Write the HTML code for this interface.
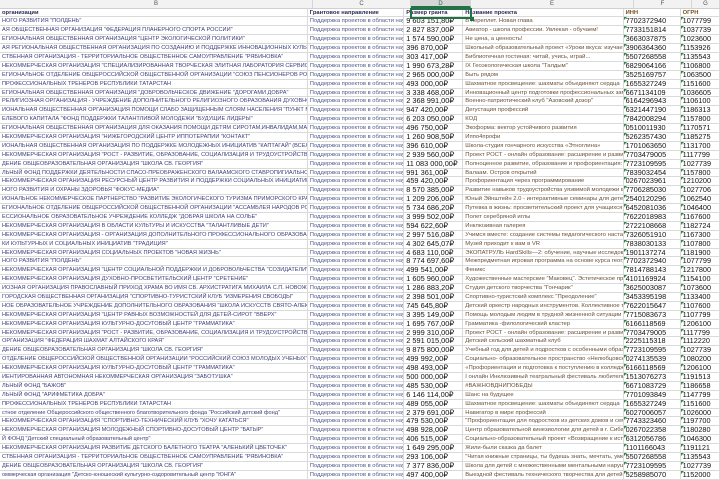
<!DOCTYPE html>
<html><head><meta charset="utf-8"><style>
*{margin:0;padding:0;box-sizing:border-box}
body{width:720px;height:480px;overflow:hidden;background:#fff;font-family:"Liberation Sans",sans-serif;position:relative}
.hd{position:absolute;left:0;top:0;width:720px;height:8.5px;background:#f2f2f2;border-bottom:1px solid #d0d0d0;font-size:6px;color:#555}
.hd span{position:absolute;top:0;height:8px;line-height:8px;text-align:center;border-right:1px solid #d6d6d6}
.rows{position:absolute;left:0;top:8.5px;width:720px}
.r{height:8.9px;display:flex;border-bottom:1px solid #dadada;white-space:nowrap;line-height:8px}
.r span{overflow:hidden;border-right:1px solid #dadada;padding-left:2px;position:relative}
.b{width:313px;font-size:5.6px;color:#3a3f7a}
.c{width:98px;font-size:5.8px;color:#4e5a8a}
.d{width:60px;font-size:7.4px;color:#111}
.e{width:163px;font-size:5.9px;color:#6a5038}
.f{width:58px;font-size:7.3px;color:#111}
.g{width:40px;font-size:7.3px;color:#111}
.f:before,.g:before{content:"";position:absolute;left:0;top:0;border-top:3px solid #2e8b3a;border-right:3px solid transparent}
.h span{font-size:5.8px;font-weight:bold;color:#2a2a5a}
.h .f:before,.h .g:before{display:none}
.sel{position:absolute;left:410px;top:8px;width:62px;height:10.5px;border:2px solid #217346}
.sel:after{content:"";position:absolute;right:-4px;bottom:-4px;width:4px;height:4px;background:#217346}
</style></head><body>
<div class="hd">
<span style="left:0;width:313px">B</span>
<span style="left:313px;width:98px">C</span>
<span style="left:411px;width:60px;background:#d6d6d6;color:#217346;border-bottom:2px solid #217346">D</span>
<span style="left:471px;width:163px">E</span>
<span style="left:634px;width:58px">F</span>
<span style="left:692px;width:28px">G</span>
</div>
<div class="rows">
<div class="r h"><span class="b">организации</span><span class="c">Грантовое направление</span><span class="d">Размер гранта</span><span class="e">Название проекта</span><span class="f" style="color:#7a5020">ИНН</span><span class="g" style="color:#7a5020">ОГРН</span></div>
<div class="r"><span class="b">НОГО РАЗВИТИЯ "ПОЛДЕНЬ"</span><span class="c">Поддержка проектов в области нау</span><span class="d">9 603 151,80₽</span><span class="e">В переплет. Новая глава</span><span class="f">7702372940</span><span class="g">1077799</span></div>
<div class="r"><span class="b">АЯ ОБЩЕСТВЕННАЯ ОРГАНИЗАЦИЯ "ФЕДЕРАЦИЯ ПЛАНЕРНОГО СПОРТА РОССИИ"</span><span class="c">Поддержка проектов в области нау</span><span class="d">2 827 837,00₽</span><span class="e">Авиатор - школа профессии. Увлекая - обучаем!</span><span class="f">7733151814</span><span class="g">1037739</span></div>
<div class="r"><span class="b">ЕГИОНАЛЬНАЯ ОБЩЕСТВЕННАЯ ОРГАНИЗАЦИЯ "ЦЕНТР ЭКОЛОГИЧЕСКОЙ ПОЛИТИКИ"</span><span class="c">Поддержка проектов в области нау</span><span class="d">1 574 590,00₽</span><span class="e">Не цена, а ценность!</span><span class="f">3663037875</span><span class="g">1023600</span></div>
<div class="r"><span class="b">АЯ РЕГИОНАЛЬНАЯ ОБЩЕСТВЕННАЯ ОРГАНИЗАЦИЯ ПО СОЗДАНИЮ И ПОДДЕРЖКЕ ИННОВАЦИОННЫХ КУЛЬТУРНЫХ</span><span class="c">Поддержка проектов в области нау</span><span class="d">396 870,00₽</span><span class="e">Школьный образовательный проект «Уроки вкуса: изучаем</span><span class="f">3906364360</span><span class="g">1153926</span></div>
<div class="r"><span class="b">СТВЕННАЯ ОРГАНИЗАЦИЯ - ТЕРРИТОРИАЛЬНОЕ ОБЩЕСТВЕННОЕ САМОУПРАВЛЕНИЕ "РЯБИНОВКА"</span><span class="c">Поддержка проектов в области нау</span><span class="d">303 417,00₽</span><span class="e">Библиотечная гостиная: читай, учись, играй...</span><span class="f">5507268558</span><span class="g">1135543</span></div>
<div class="r"><span class="b">НЕКОММЕРЧЕСКАЯ ОРГАНИЗАЦИЯ "СПЕЦИАЛИЗИРОВАННАЯ ТВОРЧЕСКАЯ ЭЛИТНАЯ ЛАБОРАТОРИЯ СЕРВИСА И ИСКУС</span><span class="c">Поддержка проектов в области нау</span><span class="d">1 990 673,28₽</span><span class="e">IX Геоэкологическая школа "Талдым"</span><span class="f">6829064166</span><span class="g">1106800</span></div>
<div class="r"><span class="b">ЕГИОНАЛЬНОЕ ОТДЕЛЕНИЕ ОБЩЕРОССИЙСКОЙ ОБЩЕСТВЕННОЙ ОРГАНИЗАЦИИ "СОЮЗ ПЕНСИОНЕРОВ РОССИИ"</span><span class="c">Поддержка проектов в области нау</span><span class="d">2 965 000,00₽</span><span class="e">Быть рядом</span><span class="f">3525169757</span><span class="g">1063500</span></div>
<div class="r"><span class="b">ПРОФЕССИОНАЛЬНЫХ ТРЕНЕРОВ РЕСПУБЛИКИ ТАТАРСТАН</span><span class="c">Поддержка проектов в области нау</span><span class="d">493 000,00₽</span><span class="e">Шахматное просвещение: шахматы объединяют сердца</span><span class="f">1655327249</span><span class="g">1151600</span></div>
<div class="r"><span class="b">ЕГИОНАЛЬНАЯ ОБЩЕСТВЕННАЯ ОРГАНИЗАЦИЯ "ДОБРОВОЛЬЧЕСКОЕ ДВИЖЕНИЕ "ДОРОГАМИ ДОБРА"</span><span class="c">Поддержка проектов в области нау</span><span class="d">3 338 468,00₽</span><span class="e">Инновационный центр подготовки профессиональных заме</span><span class="f">6671134109</span><span class="g">1036605</span></div>
<div class="r"><span class="b">РЕЛИГИОЗНАЯ ОРГАНИЗАЦИЯ - УЧРЕЖДЕНИЕ ДОПОЛНИТЕЛЬНОГО РЕЛИГИОЗНОГО ОБРАЗОВАНИЯ ДУХОВНО-ПАТР</span><span class="c">Поддержка проектов в области нау</span><span class="d">2 368 991,00₽</span><span class="e">Военно-патриотический клуб "Азовский дозор"</span><span class="f">6164296943</span><span class="g">1106100</span></div>
<div class="r"><span class="b">ИОНАЛЬНАЯ ОБЩЕСТВЕННАЯ ОРГАНИЗАЦИЯ ПОМОЩИ СЛАБО ЗАЩИЩЕННЫМ СЛОЯМ НАСЕЛЕНИЯ "ПУНКТ МИЛО</span><span class="c">Поддержка проектов в области нау</span><span class="d">947 420,00₽</span><span class="e">Дегустация профессий</span><span class="f">6321447190</span><span class="g">1186313</span></div>
<div class="r"><span class="b">ЕЛЕВОГО КАПИТАЛА "ФОНД ПОДДЕРЖКИ ТАЛАНТЛИВОЙ МОЛОДЕЖИ "БУДУЩИЕ ЛИДЕРЫ"</span><span class="c">Поддержка проектов в области нау</span><span class="d">6 203 050,00₽</span><span class="e">КОД</span><span class="f">7842008294</span><span class="g">1157800</span></div>
<div class="r"><span class="b">ЕГИОНАЛЬНАЯ ОБЩЕСТВЕННАЯ ОРГАНИЗАЦИЯ ДЛЯ ОКАЗАНИЯ ПОМОЩИ ДЕТЯМ СИРОТАМ,ИНВАЛИДАМ,МАЛО</span><span class="c">Поддержка проектов в области нау</span><span class="d">496 750,00₽</span><span class="e">Экоформа: вектор устойчивого развития</span><span class="f">0510011930</span><span class="g">1170571</span></div>
<div class="r"><span class="b">НЕКОММЕРЧЕСКАЯ ОРГАНИЗАЦИЯ "НИЖЕГОРОДСКИЙ ЦЕНТР ИППОТЕРАПИИ "КОНТАКТ"</span><span class="c">Поддержка проектов в области нау</span><span class="d">1 260 908,50₽</span><span class="e">Иппо4профи</span><span class="f">5262357430</span><span class="g">1185275</span></div>
<div class="r"><span class="b">ИОНАЛЬНАЯ ОБЩЕСТВЕННАЯ ОРГАНИЗАЦИЯ ПО ПОДДЕРЖКЕ МОЛОДЕЖНЫХ ИНИЦИАТИВ "КАПТАГАЙ" (ВСЕЛЕНН</span><span class="c">Поддержка проектов в области нау</span><span class="d">396 610,00₽</span><span class="e">Школа-студия гончарного искусства «Этноглина»</span><span class="f">1701063650</span><span class="g">1131700</span></div>
<div class="r"><span class="b">НЕКОММЕРЧЕСКАЯ ОРГАНИЗАЦИЯ "РОСТ - РАЗВИТИЕ, ОБРАЗОВАНИЕ, СОЦИАЛИЗАЦИЯ И ТРУДОУСТРОЙСТВО ДЛЯ</span><span class="c">Поддержка проектов в области нау</span><span class="d">2 939 560,00₽</span><span class="e">Проект РОСТ - онлайн образование: расширение и развитие</span><span class="f">7703479005</span><span class="g">1117799</span></div>
<div class="r"><span class="b">ДЕНИЕ ОБЩЕОБРАЗОВАТЕЛЬНАЯ ОРГАНИЗАЦИЯ "ШКОЛА СВ. ГЕОРГИЯ"</span><span class="c">Поддержка проектов в области нау</span><span class="d">11 083 000,00₽</span><span class="e">Полноценное развитие, образование и профориентация: уча</span><span class="f">7723109595</span><span class="g">1027739</span></div>
<div class="r"><span class="b">ЛЬНЫЙ ФОНД ПОДДЕРЖКИ ДЕЯТЕЛЬНОСТИ СПАСО-ПРЕОБРАЖЕНСКОГО ВАЛААМСКОГО СТАВРОПИГИАЛЬНОГО МУЖ</span><span class="c">Поддержка проектов в области нау</span><span class="d">991 361,00₽</span><span class="e">Валаам. Остров открытий</span><span class="f">7839032454</span><span class="g">1157800</span></div>
<div class="r"><span class="b">НЕКОММЕРЧЕСКАЯ ОРГАНИЗАЦИЯ РЕСУРСНЫЙ ЦЕНТР РАЗВИТИЯ И ПОДДЕРЖКИ СОЦИАЛЬНЫХ ИНИЦИАТИВ "ЗАУР</span><span class="c">Поддержка проектов в области нау</span><span class="d">459 420,00₽</span><span class="e">Профориентация через программирование</span><span class="f">0267023961</span><span class="g">1210200</span></div>
<div class="r"><span class="b">НОГО РАЗВИТИЯ И ОХРАНЫ ЗДОРОВЬЯ "ФОКУС-МЕДИА"</span><span class="c">Поддержка проектов в области нау</span><span class="d">8 570 385,00₽</span><span class="e">Развитие навыков трудоустройства уязвимой молодежи в Т</span><span class="f">7706285030</span><span class="g">1027706</span></div>
<div class="r"><span class="b">ИОНАЛЬНОЕ НЕКОММЕРЧЕСКОЕ ПАРТНЕРСТВО "РАЗВИТИЕ ЭКОЛОГИЧЕСКОГО ТУРИЗМА ПРИМОРСКОГО КРАЯ"</span><span class="c">Поддержка проектов в области нау</span><span class="d">1 209 206,00₽</span><span class="e">Юный Эйнштейн 2.0 - интерактивные семинары для детей</span><span class="f">2540120296</span><span class="g">1062540</span></div>
<div class="r"><span class="b">ЕГИОНАЛЬНОЕ ОТДЕЛЕНИЕ ОБЩЕРОССИЙСКОЙ ОБЩЕСТВЕННОЙ ОРГАНИЗАЦИИ "АССАМБЛЕЯ НАРОДОВ РОССИИ"</span><span class="c">Поддержка проектов в области нау</span><span class="d">5 734 686,20₽</span><span class="e">Путевка в жизнь: просветительский проект для учащихся</span><span class="f">6452081036</span><span class="g">1046400</span></div>
<div class="r"><span class="b">ЕССИОНАЛЬНОЕ ОБРАЗОВАТЕЛЬНОЕ УЧРЕЖДЕНИЕ КОЛЛЕДЖ "ДОБРАЯ ШКОЛА НА СОЛЬЕ"</span><span class="c">Поддержка проектов в области нау</span><span class="d">3 999 502,00₽</span><span class="e">Полет серебряной иглы</span><span class="f">7622018983</span><span class="g">1167600</span></div>
<div class="r"><span class="b">НЕКОММЕРЧЕСКАЯ ОРГАНИЗАЦИЯ В ОБЛАСТИ КУЛЬТУРЫ И ИСКУССТВА "ТАЛАНТЛИВЫЕ ДЕТИ"</span><span class="c">Поддержка проектов в области нау</span><span class="d">594 622,60₽</span><span class="e">Инклюзивная галерея</span><span class="f">2722108668</span><span class="g">1182724</span></div>
<div class="r"><span class="b">НЕКОММЕРЧЕСКАЯ ОРГАНИЗАЦИЯ - ОРГАНИЗАЦИЯ ДОПОЛНИТЕЛЬНОГО ПРОФЕССИОНАЛЬНОГО ОБРАЗОВАНИЯ "П</span><span class="c">Поддержка проектов в области нау</span><span class="d">2 997 516,08₽</span><span class="e">Учимся вместе: создание системы педагогического наставн</span><span class="f">7326051910</span><span class="g">1167300</span></div>
<div class="r"><span class="b">КИ КУЛЬТУРНЫХ И СОЦИАЛЬНЫХ ИНИЦИАТИВ "ТРАДИЦИЯ"</span><span class="c">Поддержка проектов в области нау</span><span class="d">4 302 645,07₽</span><span class="e">Музей приходит к вам в VR</span><span class="f">7838030133</span><span class="g">1107800</span></div>
<div class="r"><span class="b">НЕКОММЕРЧЕСКАЯ ОРГАНИЗАЦИЯ СОЦИАЛЬНЫХ ПРОЕКТОВ "НОВАЯ ЖИЗНЬ"</span><span class="c">Поддержка проектов в области нау</span><span class="d">4 683 110,00₽</span><span class="e">ЭКОПАТРУЛЬ HardSkills—2: обучение, научные исследова</span><span class="f">1901137274</span><span class="g">1181900</span></div>
<div class="r"><span class="b">НОГО РАЗВИТИЯ "ПОЛДЕНЬ"</span><span class="c">Поддержка проектов в области нау</span><span class="d">8 774 697,60₽</span><span class="e">Межпредметная игровая программа на основе курса геогр</span><span class="f">7702372940</span><span class="g">1077799</span></div>
<div class="r"><span class="b">НЕКОММЕРЧЕСКАЯ ОРГАНИЗАЦИЯ "ЦЕНТР СОЦИАЛЬНОЙ ПОДДЕРЖКИ И ДОБРОВОЛЬЧЕСТВА "СОЗИДАТЕЛИ"</span><span class="c">Поддержка проектов в области нау</span><span class="d">499 541,00₽</span><span class="e">Феникс</span><span class="f">7814788143</span><span class="g">1217800</span></div>
<div class="r"><span class="b">НЕКОММЕРЧЕСКАЯ ОРГАНИЗАЦИЯ ДУХОВНО-ПРОСВЕТИТЕЛЬСКИЙ ЦЕНТР "СРЕТЕНИЕ"</span><span class="c">Поддержка проектов в области нау</span><span class="d">1 605 960,00₽</span><span class="e">Художественные мастерские "Маковец". Эстетическое про</span><span class="f">4101169924</span><span class="g">1154100</span></div>
<div class="r"><span class="b">ИОЗНАЯ ОРГАНИЗАЦИЯ ПРАВОСЛАВНЫЙ ПРИХОД ХРАМА ВО ИМЯ СВ. АРХИСТРАТИГА МИХАИЛА С.П. НОВОЖИВО</span><span class="c">Поддержка проектов в области нау</span><span class="d">1 286 883,20₽</span><span class="e">Студия детского творчества "Гончарик"</span><span class="f">3625003087</span><span class="g">1073600</span></div>
<div class="r"><span class="b">ГОРОДСКАЯ ОБЩЕСТВЕННАЯ ОРГАНИЗАЦИЯ "СПОРТИВНО-ТУРИСТСКИЙ КЛУБ "ИЗМЕРЕНИЯ СВОБОДЫ"</span><span class="c">Поддержка проектов в области нау</span><span class="d">2 398 501,00₽</span><span class="e">Спортивно-туристский комплекс "Преодоление"</span><span class="f">3453395198</span><span class="g">1133400</span></div>
<div class="r"><span class="b">НОЕ ОБРАЗОВАТЕЛЬНОЕ УЧРЕЖДЕНИЕ ДОПОЛНИТЕЛЬНОГО ОБРАЗОВАНИЯ "ШКОЛА ИСКУССТВ СВЯТО-АЛЕКСИЕВ</span><span class="c">Поддержка проектов в области нау</span><span class="d">745 645,80₽</span><span class="e">Детский оркестр народных инструментов. Коллективное тв</span><span class="f">7622015647</span><span class="g">1107600</span></div>
<div class="r"><span class="b">НЕКОММЕРЧЕСКАЯ ОРГАНИЗАЦИЯ "ЦЕНТР РАВНЫХ ВОЗМОЖНОСТЕЙ ДЛЯ ДЕТЕЙ-СИРОТ "ВВЕРХ"</span><span class="c">Поддержка проектов в области нау</span><span class="d">3 395 149,00₽</span><span class="e">Помощь молодым людям в трудной жизненной ситуации в</span><span class="f">7715083673</span><span class="g">1107799</span></div>
<div class="r"><span class="b">НЕКОММЕРЧЕСКАЯ ОРГАНИЗАЦИЯ КУЛЬТУРНО-ДОСУГОВЫЙ ЦЕНТР "ГРАММАТИКА"</span><span class="c">Поддержка проектов в области нау</span><span class="d">1 695 767,00₽</span><span class="e">Грамматика -филологический кластер</span><span class="f">6166118569</span><span class="g">1206100</span></div>
<div class="r"><span class="b">НЕКОММЕРЧЕСКАЯ ОРГАНИЗАЦИЯ "РОСТ - РАЗВИТИЕ, ОБРАЗОВАНИЕ, СОЦИАЛИЗАЦИЯ И ТРУДОУСТРОЙСТВО ДЛЯ</span><span class="c">Поддержка проектов в области нау</span><span class="d">2 999 310,00₽</span><span class="e">Проект РОСТ - онлайн образование: расширение и развитие</span><span class="f">7703479005</span><span class="g">1117799</span></div>
<div class="r"><span class="b">ОРГАНИЗАЦИЯ "ФЕДЕРАЦИЯ ШАХМАТ АЛТАЙСКОГО КРАЯ"</span><span class="c">Поддержка проектов в области нау</span><span class="d">2 591 015,00₽</span><span class="e">Детский сельский шахматный клуб</span><span class="f">2225115318</span><span class="g">1112220</span></div>
<div class="r"><span class="b">ДЕНИЕ ОБЩЕОБРАЗОВАТЕЛЬНАЯ ОРГАНИЗАЦИЯ "ШКОЛА СВ. ГЕОРГИЯ"</span><span class="c">Поддержка проектов в области нау</span><span class="d">9 875 800,00₽</span><span class="e">Учебный год для детей и подростков с особенными образов</span><span class="f">7723109595</span><span class="g">1027739</span></div>
<div class="r"><span class="b">ОТДЕЛЕНИЕ ОБЩЕРОССИЙСКОЙ ОБЩЕСТВЕННОЙ ОРГАНИЗАЦИИ "РОССИЙСКИЙ СОЮЗ МОЛОДЫХ УЧЕНЫХ" В РЕСП</span><span class="c">Поддержка проектов в области нау</span><span class="d">499 992,00₽</span><span class="e">Социально- образовательное пространство «Нелюбцовский</span><span class="f">0274135539</span><span class="g">1080200</span></div>
<div class="r"><span class="b">НЕКОММЕРЧЕСКАЯ ОРГАНИЗАЦИЯ КУЛЬТУРНО-ДОСУГОВЫЙ ЦЕНТР "ГРАММАТИКА"</span><span class="c">Поддержка проектов в области нау</span><span class="d">498 493,00₽</span><span class="e">«Профориентация и подготовка к поступлению в колледж,</span><span class="f">6166118569</span><span class="g">1206100</span></div>
<div class="r"><span class="b">ИЕНТИРОВАННАЯ АВТОНОМНАЯ НЕКОММЕРЧЕСКАЯ ОРГАНИЗАЦИЯ "ЗАБОТУШКА"</span><span class="c">Поддержка проектов в области нау</span><span class="d">500 000,00₽</span><span class="e">I онлайн Инклюзивный театральный фестиваль любительск</span><span class="f">1513076273</span><span class="g">1191513</span></div>
<div class="r"><span class="b">ЛЬНЫЙ ФОНД "БАЖОВ"</span><span class="c">Поддержка проектов в области нау</span><span class="d">485 530,00₽</span><span class="e">#ВАЖНОВДНИПОБЕДЫ</span><span class="f">6671083729</span><span class="g">1186658</span></div>
<div class="r"><span class="b">ЛЬНЫЙ ФОНД "АРИФМЕТИКА ДОБРА"</span><span class="c">Поддержка проектов в области нау</span><span class="d">6 146 114,00₽</span><span class="e">Шанс на будущее</span><span class="f">7701093849</span><span class="g">1147799</span></div>
<div class="r"><span class="b">ПРОФЕССИОНАЛЬНЫХ ТРЕНЕРОВ РЕСПУБЛИКИ ТАТАРСТАН</span><span class="c">Поддержка проектов в области нау</span><span class="d">489 055,00₽</span><span class="e">Шахматное просвещение: шахматы объединяют сердца</span><span class="f">1655327249</span><span class="g">1151600</span></div>
<div class="r"><span class="b">стное отделение Общероссийского общественного благотворительного фонда "Российский детский фонд"</span><span class="c">Поддержка проектов в области нау</span><span class="d">2 379 691,00₽</span><span class="e">Навигатор в мире профессий</span><span class="f">6027006057</span><span class="g">1026000</span></div>
<div class="r"><span class="b">НЕКОММЕРЧЕСКАЯ ОРГАНИЗАЦИЯ "СПОРТИВНО-ТЕХНИЧЕСКИЙ КЛУБ "ХОЧУ КАТАТЬСЯ"</span><span class="c">Поддержка проектов в области нау</span><span class="d">479 530,00₽</span><span class="e">"Профориентация для подростков из детских домов и семе</span><span class="f">7743323460</span><span class="g">1197700</span></div>
<div class="r"><span class="b">НЕКОММЕРЧЕСКАЯ ОРГАНИЗАЦИЯ МОЛОДЕЖНЫЙ СПОРТИВНО-ДОСУГОВЫЙ ЦЕНТР "БАТЫР"</span><span class="c">Поддержка проектов в области нау</span><span class="d">498 928,00₽</span><span class="e">Центр образовательной кинезиологии для детей в г. Сибай</span><span class="f">0267022358</span><span class="g">1180280</span></div>
<div class="r"><span class="b">Й ФОНД "Детский специальный образовательный центр"</span><span class="c">Поддержка проектов в области нау</span><span class="d">406 515,00₽</span><span class="e">Социально-образовательный проект «Возвращение к исто</span><span class="f">6312056786</span><span class="g">1046300</span></div>
<div class="r"><span class="b">НЕКОММЕРЧЕСКАЯ ОРГАНИЗАЦИЯ РАЗВИТИЕ ДЕТСКОГО БАЛЕТНОГО ТЕАТРА "АЛЕНЬКИЙ ЦВЕТОЧЕК"</span><span class="c">Поддержка проектов в области нау</span><span class="d">1 649 295,00₽</span><span class="e">Жили-были сказка да балет</span><span class="f">1101166043</span><span class="g">1191121</span></div>
<div class="r"><span class="b">СТВЕННАЯ ОРГАНИЗАЦИЯ - ТЕРРИТОРИАЛЬНОЕ ОБЩЕСТВЕННОЕ САМОУПРАВЛЕНИЕ "РЯБИНОВКА"</span><span class="c">Поддержка проектов в области нау</span><span class="d">293 106,00₽</span><span class="e">"Читая книжные страницы, ты будешь знать, мечтать, умет</span><span class="f">5507268558</span><span class="g">1135543</span></div>
<div class="r"><span class="b">ДЕНИЕ ОБЩЕОБРАЗОВАТЕЛЬНАЯ ОРГАНИЗАЦИЯ "ШКОЛА СВ. ГЕОРГИЯ"</span><span class="c">Поддержка проектов в области нау</span><span class="d">7 377 836,00₽</span><span class="e">Школа для детей с множественными ментальными наруш</span><span class="f">7723109595</span><span class="g">1027739</span></div>
<div class="r"><span class="b">оммерческая организация "Детско-юношеский культурно-оздоровительный центр "ЮНГА"</span><span class="c">Поддержка проектов в области нау</span><span class="d">497 400,00₽</span><span class="e">Выездной фестиваль технического творчества для детей-си</span><span class="f">5258985070</span><span class="g">1152000</span></div>
</div>
<div class="sel"></div>
</body></html>
